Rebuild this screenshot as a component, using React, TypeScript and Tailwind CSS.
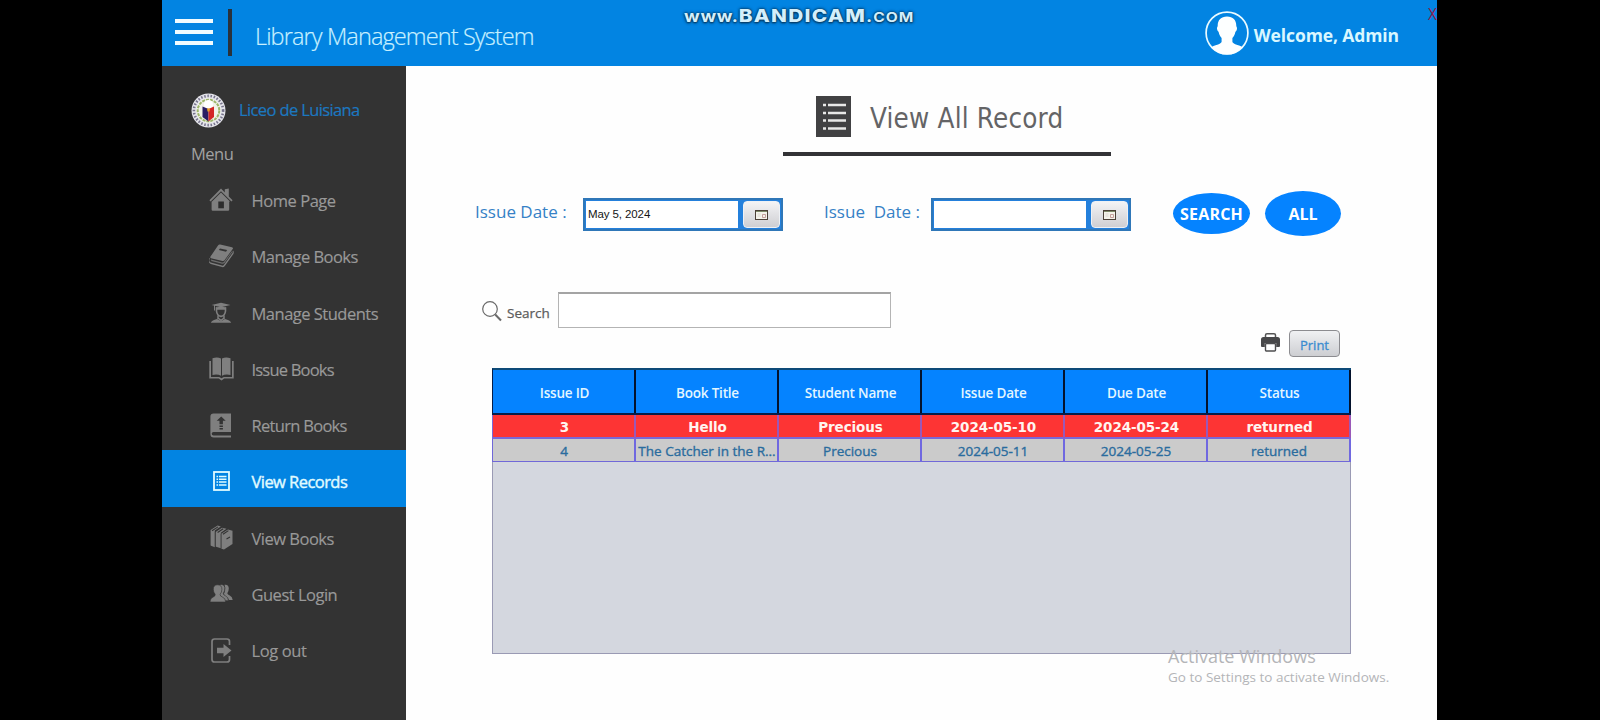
import React from "react";

const sans = "font-['Open_Sans','Noto_Sans',sans-serif]";

function HomeIcon() {
  return (
    <svg width="24" height="24" viewBox="0 0 24 24" fill="currentColor">
      <path d="M12 .6 15.8 4.4V1.2L19.8.4v8l3.8 3.8-1.2 1.2L12 3.2 1.6 13.4.4 12.200z" />
      <path d="M12 4.600 21 13.400h-.8V21.500q0 1.200-1.200 1.200H3.800q-1.200 0-1.200-1.200V13.400H3z" />
      <path d="M9.300 13.500h5.600v6.800H9.300z" fill="#2d2d2d" />
    </svg>
  );
}

function BookIcon() {
  return (
    <svg width="25" height="24" viewBox="0 0 25 24" fill="currentColor">
      <path d="M9 1.500Q9.800.3 11.200.6L23 3.200q1.500.5.700 1.800L15.500 16.200q-.8 1-2 .7L2 14.200Q.8 13.700 1.500 12.600z" />
      <path d="M1 14.200q-2 3 .8 4.300L13 21.600q1.200.2 1.800-.5L23.500 9l.8-2.600q1 2.600-.3 4.200L15.800 22q-1.200 1.500-2.800 1.100L1.800 20Q-1.500 18 .3 14.200z" />
      <path d="M2 15.500l11 2.900q1.500.2 2.300-1L23.500 6.500v1.200L15.500 19q-1 1-2.500.7L2.300 17z" fill="#b4b4b4" opacity=".45" />
      <path d="m11 4.400 7.200 1.700-1.200 1.600-7.200-1.700z" fill="#333" />
    </svg>
  );
}

function StudentIcon() {
  return (
    <svg width="22" height="22" viewBox="0 0 22 22" fill="none" stroke="currentColor">
      <path d="m1.500 3 9.500-2.300L20.500 3 11 5.300z" fill="currentColor" stroke="none" />
      <path d="M4.500 3v5.500" strokeWidth="1" />
      <path d="M6.500 5.200V9q.4 4.600 4.500 5.400Q15.100 13.600 15.500 9V5.200" strokeWidth="1.600" />
      <path d="M6 5.500q5-1.600 10 0v2.300H6z" fill="currentColor" stroke="none" />
      <path d="M8 13.500v3.700M14 13.500v3.700M8 16l3 2.500 3-2.500" strokeWidth="1.500" />
      <path d="M.8 20.800Q2 18.200 7 17l4 2.200L15 17q5 1.200 6.200 3.800z" fill="currentColor" stroke="none" />
    </svg>
  );
}

function OpenBookIcon() {
  return (
    <svg width="25" height="24" viewBox="0 0 25 24" fill="currentColor">
      <path d="M3.500 1.200Q8.500-.6 12 1.600V18.800Q8.500 16.800 3.500 18zM13 1.600Q16.500-.6 21.500 1.200V18Q16.500 16.800 13 18.800z" />
      <path d="M.3 4H2v16h8.200l2.300 1.300 2.300-1.300H23V4h1.700v17.600H15.300l-2.800 1.800-2.800-1.800H.3z" />
    </svg>
  );
}

function ReturnIcon() {
  return (
    <svg width="22" height="25" viewBox="0 0 22 25">
      <path d="M3.500.5H21V19H3.500q-1.800 0-1.800 1.800t1.800 1.800H21v1.900H3.800Q.4 24.500.4 21V3.600Q.4.500 3.500.500z" fill="currentColor" />
      <path d="m11.200 3.500 4.500 4.300h-2.800v3.400H9.500V7.800H6.700zM9.500 12.400h3.400v1.500H9.500zM9.500 15h3.400v1.400H9.500z" fill="#333" />
    </svg>
  );
}

function RecordsIcon() {
  return (
    <svg width="17" height="20" viewBox="0 0 17 20" fill="none" stroke="currentColor">
      <rect x="1" y="1" width="15" height="18" strokeWidth="1.800" />
      <path d="M3.500 5.500h1.600M6 5.500h7.500M3.500 8.300h1.600M6 8.300h7.500M3.500 11.100h1.600M6 11.100h7.500M3.500 13.900h1.600M6 13.900h7.500" strokeWidth="1.500" />
    </svg>
  );
}

function BooksIcon() {
  return (
    <svg width="23" height="25" viewBox="0 0 23 25" fill="currentColor">
      <path d="M.6 5 7.600.6l3.200 1-6 4v16.600L1 20.700q-.4-.2-.4-.8z" />
      <path d="M5.600 7l6.400-4.300 4.500 1-5.700 4.100v15.400l-4.700-1.400Q5.600 21.600 5.600 21z" />
      <path d="M11.300 8.800l6.700-4.300 4.500 1.300V18.900L14 24.500l-2.700-.8z" />
      <path d="m2 5.800 6-3.900M7.600 7.500l5.600-3.700M13 9.300l5.400-3.700M16.500 14l3.500-2" fill="none" stroke="#333" strokeWidth="1.100" />
      <path d="M5.300 7v14.500M11.100 9v14.500" fill="none" stroke="#333" strokeWidth=".5" />
    </svg>
  );
}

function GuestsIcon() {
  return (
    <svg width="23" height="19" viewBox="0 0 23 19" fill="currentColor">
      <path d="M14.500.8q4-.8 4.300 3.400 0 3-1.500 5 .2 1.500 2.500 2.300 2.600 1 2.900 4.500H19q-.7-2.500-4-3.800L13.800 10q2.400-4.500.7-9.200z" />
      <path d="M9.500 1q4.400-1.500 5.300 2.300.4 3.400-1.500 6 0 1.700 2 2.400 2.900 1.200 3.200 5h-3.500l-6-6z" stroke="#333" strokeWidth=".6" />
      <path d="M7.500.8q4.400 0 4.400 4.500 0 3-1.800 5 0 2 2.200 2.700 3.200 1 3.400 5H0q.2-4 3.200-5 2.200-.7 2-2.700Q3.300 8.500 3.300 5.300 3.300.8 7.500.8z" stroke="#333" strokeWidth=".6" />
    </svg>
  );
}

function LogoutIcon() {
  return (
    <svg width="21" height="25" viewBox="0 0 21 25">
      <path d="M18.500 7V3.500Q18.500 1 16 1H3.500Q1 1 1 3.500v18Q1 24 3.500 24H16q2.500 0 2.500-2.500V18" fill="none" stroke="currentColor" strokeWidth="1.700" />
      <path d="M6 9.800h6.500V6L20.500 12.500 12.500 19v-3.800H6z" fill="currentColor" />
    </svg>
  );
}

const menu = [
  { label: "Home Page", Icon: HomeIcon, track: "tracking-[-0.45px]" },
  { label: "Manage Books", Icon: BookIcon, track: "tracking-[-0.55px]" },
  { label: "Manage Students", Icon: StudentIcon, track: "tracking-[-0.5px]" },
  { label: "Issue Books", Icon: OpenBookIcon, track: "tracking-[-0.8px]" },
  { label: "Return Books", Icon: ReturnIcon, track: "tracking-[-0.7px]" },
  { label: "View Records", Icon: RecordsIcon, track: "tracking-[-0.55px]", active: true },
  { label: "View Books", Icon: BooksIcon, track: "tracking-[-0.5px]" },
  { label: "Guest Login", Icon: GuestsIcon, track: "tracking-[-0.5px]" },
  { label: "Log out", Icon: LogoutIcon, track: "tracking-[-0.4px]" },
];

function Seal() {
  return (
    <svg width="35" height="35" viewBox="0 0 35 35">
      <circle cx="17.500" cy="17.500" r="17" fill="#e4e4ea" />
      <circle cx="17.500" cy="17.500" r="14.600" fill="none" stroke="#77748c" strokeWidth="2.600" strokeDasharray="1.500 1.700" />
      <circle cx="17.500" cy="17.500" r="12.300" fill="#f1f2ea" />
      <circle cx="17.500" cy="17.500" r="10.800" fill="none" stroke="#9cb56a" strokeWidth="2" strokeDasharray="3 1" />
      <circle cx="17.500" cy="11.500" r="4.500" fill="#fff" />
      <path d="M11.500 13.500 17.500 16v12.500L11.500 24z" fill="#2a1d63" />
      <path d="M17.500 16l5.500-2.500V24l-5.500 4.500z" fill="#d32626" />
      <path d="M16 15.300l3 .1-.5 3h-2z" fill="#e8a22a" />
    </svg>
  );
}

function Avatar() {
  return (
    <svg width="44" height="44" viewBox="0 0 44 44">
      <circle cx="22" cy="22" r="20.900" fill="none" stroke="#e9faff" strokeWidth="1.700" />
      <path
        d="M22 5.500c6 0 9.300 3.500 9.300 9.500 0 .8 1 1 .6 3.200-.3 1.700-1 2.300-1.500 2.600-.5 2.700-1.500 4.700-3 6.200v4c1 2.500 7 3 10.400 5.300A20.900 20.900 0 0 1 6.200 36.300C9.600 34 15.600 33.500 16.600 31v-4c-1.500-1.500-2.500-3.500-3-6.200-.5-.3-1.200-.9-1.500-2.600-.4-2.200.6-2.400.6-3.200 0-6 3.300-9.500 9.300-9.500z"
        fill="#fdffff"
      />
    </svg>
  );
}

function CalendarIcon() {
  return (
    <svg width="13" height="10" viewBox="0 0 13 10">
      <rect x=".5" y=".5" width="12" height="9" fill="#f4f2ea" stroke="#4c4038" />
      <path d="M1 1.500h11" stroke="#7d8a68" />
      <path d="M7.500 4.500h3v3h-3z" fill="none" stroke="#b98a8a" strokeWidth=".8" />
      <path d="M2.500 4h3M2.500 6h3" stroke="#dcd6d0" />
    </svg>
  );
}

function DateField({ value }: { value: string }) {
  return (
    <div className="flex h-[33px] w-[200px] border-2 border-[#2f77b8] bg-[#2480dc] pt-px pl-px">
      <div className="flex h-[27px] w-[152px] items-center bg-white pl-[2px] font-['Liberation_Sans',Arial,sans-serif] text-[11.500px] tracking-[-0.1px] text-[#151515]">
        {value}
      </div>
      <button className="ml-[5px] flex h-[27px] w-[37px] items-center justify-center rounded-[4px] border border-[#eef1f5] bg-linear-to-b from-[#f3f3f5] to-[#cfcfd3]">
        <CalendarIcon />
      </button>
    </div>
  );
}

const columns = ["Issue ID", "Book Title", "Student Name", "Issue Date", "Due Date", "Status"];
const first = ["3", "Hello", "Precious", "2024-05-10", "2024-05-24", "returned"];
const second = ["4", "The Catcher in the R...", "Precious", "2024-05-11", "2024-05-25", "returned"];

export default function App() {
  return (
    <div className={`${sans} flex h-[720px] w-[1600px] justify-start overflow-hidden bg-black pl-[162px]`}>
      <div className="flex w-[1275px] flex-col overflow-hidden bg-[#fefefe]">
        <header className="relative flex h-[66px] shrink-0 bg-[#0284e2]">
          <div className="mt-[19px] ml-[13px] flex w-[38px] flex-col gap-[7px]">
            <span className="h-[4px] bg-[#f2fcff]" />
            <span className="h-[4px] bg-[#f2fcff]" />
            <span className="h-[4px] bg-[#f2fcff]" />
          </div>
          <span className="mt-[9px] ml-[15px] h-[47px] w-[4px] bg-[#29313a]" />
          <h1 className="mt-[18px] ml-[23px] text-[23.500px] leading-[36px] font-light tracking-[-0.88px] whitespace-nowrap text-[#c8f0ff] [-webkit-text-stroke:0.2px]">
            Library Management System
          </h1>
          <div className="absolute top-[5px] left-[522px] flex h-[22px] origin-left scale-x-[1.155] items-baseline font-['Inter',sans-serif] leading-[22px] font-bold whitespace-nowrap text-[#d3effb] [text-shadow:0_0_2px_#06385f,0_0_3px_#06385f,0_1px_2px_#06385f]">
            <span className="text-[16px] tracking-[0.6px]">www.</span>
            <span className="text-[18px] font-extrabold tracking-[1.100px]">BANDICAM</span>
            <span className="text-[16px] tracking-[1px]">.</span>
            <span className="text-[13.500px] tracking-[0.8px] uppercase">com</span>
          </div>
          <div className="ml-auto flex pt-[11px] pr-[38px]">
            <Avatar />
            <span className="mt-[10px] ml-[5px] text-[17.500px] leading-[28px] font-bold tracking-[-0.1px] whitespace-nowrap text-[#d9f7ff]">
              Welcome, Admin
            </span>
          </div>
          <span className="absolute top-[4px] right-0 text-[15.500px] leading-[20px] text-[#8e1a4c]">X</span>
        </header>

        <div className="flex min-h-0 flex-1">
          <aside className="w-[244px] shrink-0 bg-[#333]">
            <div className="flex h-[62px] items-center pt-[26px] pl-[29px]">
              <Seal />
              <span className="ml-[13px] text-[16.500px] leading-[24px] tracking-[-0.62px] whitespace-nowrap text-[#1c78c0] [-webkit-text-stroke:0.2px]">
                Liceo de Luisiana
              </span>
            </div>
            <div className="h-[41px] pt-[14px] pl-[29px] text-[16.500px] leading-[24px] tracking-[-0.5px] text-[#a2a2a2]">Menu</div>
            <nav className="flex flex-col">
              {menu.map(({ label, Icon, track, active }) => (
                <div
                  key={label}
                  className={
                    active
                      ? "flex h-[56.250px] items-center bg-[#0284e2] text-[#e0fbff]"
                      : "flex h-[56.250px] items-center text-[#7f7f7f]"
                  }
                >
                  <span className="ml-[44px] flex w-[30px] items-center justify-center pt-[6px]">
                    <Icon />
                  </span>
                  <span
                    className={`${track} ml-[15.500px] pt-[8px] text-[16.500px] leading-[24px] whitespace-nowrap ${active ? "[-webkit-text-stroke:0.4px]" : "text-[#999] [-webkit-text-stroke:0.15px]"}`}
                  >
                    {label}
                  </span>
                </div>
              ))}
            </nav>
          </aside>

          <main className="relative flex flex-1 flex-col">
            <div className="ml-[377px] flex h-[90px] w-[328px] border-b-4 border-[#333336] pl-[33px]">
              <svg className="mt-[30px]" width="35" height="41" viewBox="0 0 35 41">
                <path d="M0 0h35v41H0z" fill="#414143" />
                <path d="M7 9h3M7 17h3M7 24.500h3M7 32.500h3" stroke="#e8e8e8" strokeWidth="2.400" />
                <path d="M12 9h18M12 17h18M12 24.500h18M12 32.500h18" stroke="#e8e8e8" strokeWidth="2.400" />
              </svg>
              <h2 className="mt-[34px] ml-[19px] h-[36px] font-['DejaVu_Sans_Condensed','DejaVu_Sans',sans-serif] text-[27.500px] leading-[36px] tracking-[0.2px] [font-stretch:condensed] whitespace-nowrap text-[#646466]">
                View All Record
              </h2>
            </div>

            <div className="mt-[35px] flex h-[46px] items-start pl-[69px]">
              <span className="mt-[9px] w-[108px] text-[17px] leading-[24px] whitespace-nowrap text-[#3581c6]">Issue Date :</span>
              <div className="mt-[7px]">
                <DateField value="May 5, 2024" />
              </div>
              <span className="mt-[9px] ml-[41px] w-[107px] text-[17px] leading-[24px] whitespace-pre text-[#3581c6]">
                {"Issue  Date :"}
              </span>
              <div className="mt-[7px]">
                <DateField value="" />
              </div>
              <button className="mt-[2px] ml-[42px] flex h-[41px] w-[77px] items-center justify-center rounded-[50%] bg-[#0583ff] text-[16px] font-bold tracking-[0.2px] text-white">
                SEARCH
              </button>
              <button className="ml-[15px] flex h-[45px] w-[76px] items-center justify-center rounded-[50%] bg-[#0583ff] text-[16px] font-bold text-white">
                ALL
              </button>
            </div>

            <div className="mt-[55px] flex h-[36px] pl-[76px]">
              <svg className="mt-[9px]" width="20" height="21" viewBox="0 0 20 21" fill="none" stroke="#6a6a6a">
                <circle cx="8" cy="8" r="7.300" strokeWidth="1.200" />
                <path d="m13.200 13.500 5.800 6" strokeWidth="2" />
              </svg>
              <span className="mt-[10px] ml-[5px] w-[51px] text-[13.500px] leading-[22px] text-[#5c5c5c] [-webkit-text-stroke:0.25px]">Search</span>
              <div className="h-[36px] w-[333px] border border-t-2 border-[#b4b4b4] border-t-[#a4a4a4] bg-white" />
            </div>

            <div className="mt-[2px] flex h-[27px] justify-end pr-[97px]">
              <svg className="mt-[3px]" width="19" height="19" viewBox="0 0 19 19">
                <path d="M4.500 4V2.200Q4.500.8 6 .8h7q1.500 0 1.500 1.400V4" fill="none" stroke="#555" strokeWidth="1.500" />
                <path d="M2.500 4h14Q19 4 19 6.500V13q0 1-1 1h-2.800V10H3.800v4H1q-1 0-1-1V6.500Q0 4 2.500 4z" fill="#474749" />
                <rect x="4.500" y="10.500" width="10" height="7.500" rx="1" fill="#fff" stroke="#4d4d4f" strokeWidth="1.400" />
              </svg>
              <button className="ml-[9px] h-[27px] w-[51px] rounded-[4px] border border-[#8c8c90] bg-linear-to-b from-[#f0f1f3] to-[#cdced2] pt-[3px] text-[13px] leading-[20px] text-[#3a8bd0] [-webkit-text-stroke:0.3px]">
                Print
              </button>
            </div>

            <div className="mt-[11px] ml-[86px] flex h-[286px] w-[859px] flex-col border border-[#9a9ab4] bg-[#d4d7df]">
              <div className="-mx-px -mt-px grid h-[47px] shrink-0 grid-cols-6 border-t-2 border-b-2 border-l border-t-[#0d4a78] border-b-[#071d48] border-l-[#071d48] bg-[#0583ff]">
                {columns.map((c) => (
                  <div key={c} className="border-r-2 border-[#04122c] pt-[13px] pl-[2px] text-center text-[13.500px] leading-[20px] font-semibold tracking-[-0.2px] whitespace-nowrap text-[#e3f6ff]">
                    {c}
                  </div>
                ))}
              </div>
              <div className="-mx-px grid h-[24px] shrink-0 grid-cols-6 border-b-2 border-l border-[#7a68d8] bg-[#fd3434]">
                {first.map((c, i) => (
                  <div key={i} className="border-r-2 border-[#9a58b8] pt-[1px] pl-[2px] text-center font-['DejaVu_Sans',sans-serif] text-[13.500px] leading-[22px] font-bold tracking-[-0.1px] whitespace-nowrap text-[#fff4f0]">
                    {c}
                  </div>
                ))}
              </div>
              <div className="-mx-px grid h-[23px] shrink-0 grid-cols-6 border-b border-l border-[#7068d8] bg-[#cbcbcb]">
                {second.map((c, i) => (
                  <div key={i} className="border-r-2 border-[#7068e0] pt-[1px] pl-[1px] text-center text-[13.500px] leading-[22px] whitespace-nowrap text-[#2a6c9e] [-webkit-text-stroke:0.35px]">
                    {c}
                  </div>
                ))}
              </div>
            </div>

            <div className="absolute top-[577px] left-[762px] whitespace-nowrap text-[#b4b5b8]">
              <p className="text-[18px] leading-[26px]">Activate Windows</p>
              <p className="text-[13.500px] leading-[16px]">Go to Settings to activate Windows.</p>
            </div>
          </main>
        </div>
      </div>
    </div>
  );
}
